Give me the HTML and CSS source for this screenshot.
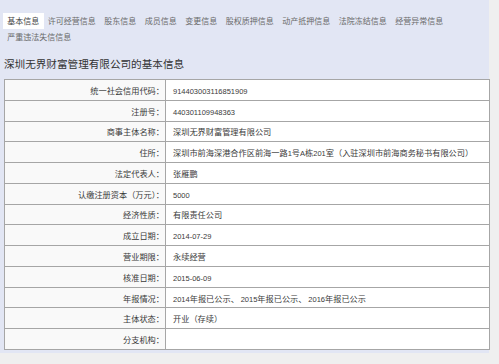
FILE: index.html
```html
<!DOCTYPE html>
<html lang="zh-CN">
<head>
<meta charset="utf-8">
<title>基本信息</title>
<link rel="stylesheet" href="styles.css">
</head>
<body>
<div class="panel">
  <ul class="tabs">
    <li class="tab active">基本信息</li>
    <li class="tab">许可经营信息</li>
    <li class="tab">股东信息</li>
    <li class="tab">成员信息</li>
    <li class="tab">变更信息</li>
    <li class="tab">股权质押信息</li>
    <li class="tab">动产抵押信息</li>
    <li class="tab">法院冻结信息</li>
    <li class="tab">经营异常信息</li>
    <li class="tab">严重违法失信信息</li>
  </ul>
  <h2 class="title">深圳无界财富管理有限公司的基本信息</h2>
  <table class="info">
    <tr><th>统一社会信用代码：</th><td><span class="num">914403003116851909</span></td></tr>
    <tr><th>注册号：</th><td><span class="num">440301109948363</span></td></tr>
    <tr><th>商事主体名称：</th><td>深圳无界财富管理有限公司</td></tr>
    <tr><th>住所：</th><td>深圳市前海深港合作区前海一路<span class="num">1</span>号<span class="num">A</span>栋<span class="num">201</span>室（入驻深圳市前海商务秘书有限公司）</td></tr>
    <tr><th>法定代表人：</th><td>张雁鹏</td></tr>
    <tr><th>认缴注册资本（万元）：</th><td><span class="num">5000</span></td></tr>
    <tr><th>经济性质：</th><td>有限责任公司</td></tr>
    <tr><th>成立日期：</th><td><span class="num">2014-07-29</span></td></tr>
    <tr><th>营业期限：</th><td>永续经营</td></tr>
    <tr><th>核准日期：</th><td><span class="num">2015-06-09</span></td></tr>
    <tr><th>年报情况：</th><td><span class="num">2014</span>年报已公示、 <span class="num">2015</span>年报已公示、 <span class="num">2016</span>年报已公示</td></tr>
    <tr><th>主体状态：</th><td>开业（存续）</td></tr>
    <tr><th>分支机构：</th><td></td></tr>
  </table>
</div>
</body>
</html>
```
FILE: styles.css
```css
html, body {
  margin: 0;
  padding: 0;
}
body {
  background: #efefef;
  font-family: "Noto Sans CJK SC", "Liberation Sans", sans-serif;
  color: #333;
}
.panel {
  width: 489px;
  background: #e2e6f4;
  padding: 13px 0 3px 3px;
  box-sizing: border-box;
}
.tabs {
  list-style: none;
  margin: 0;
  padding: 0;
  display: flex;
  flex-wrap: wrap;
}
.tab {
  font-size: 8px;
  line-height: 16px;
  height: 16px;
  padding: 0 4.25px;
  color: #6a6a6a;
  white-space: nowrap;
}
.tab.active {
  background: #fff;
  color: #444;
}
.title {
  margin: 0 0 5px 1px;
  padding-top: 9px;
  font-size: 10.6px;
  line-height: 20px;
  font-weight: normal;
  color: #333;
}
.info {
  width: 486px;
  margin-left: 1px;
  border-collapse: collapse;
  background: #fff;
  font-size: 8.2px;
}
.info th,
.info td {
  border: 1px solid #a6a6a6;
  height: 19.77px;
  padding: 0;
  box-sizing: content-box;
  white-space: nowrap;
  color: #3a3a3a;
  font-weight: normal;
}
.info th {
  width: 159px;
  text-align: right;
  padding-right: 1px;
  background: #f9f9f9;
}
.info td {
  padding-left: 7px;
  text-align: left;
}
.num {
  font-family: "Liberation Sans", sans-serif;
  font-size: 7.5px;
}
```
